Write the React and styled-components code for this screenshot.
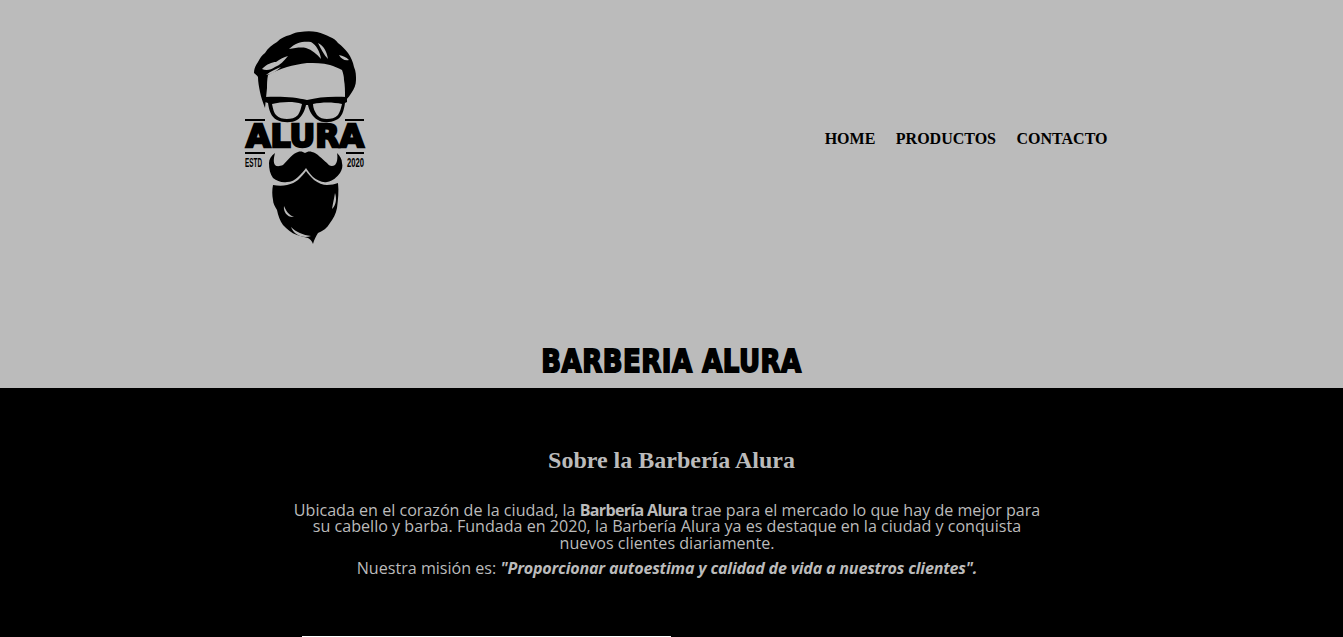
import React from "react";
import styled, { createGlobalStyle } from "styled-components";

const Global = createGlobalStyle`
  * { box-sizing: border-box; }
  html, body { margin: 0; padding: 0; height: 100%; overflow: hidden; background: #000; }
`;

const Page = styled.div`
  height: 637px;
  display: flex;
  flex-direction: column;
  overflow: hidden;
`;

const Header = styled.header`
  height: 388px;
  background: #bbbbbb;
  display: flex;
  flex-direction: column;
  align-items: center;
`;

const HeaderBar = styled.div`
  width: 940px;
  margin-top: 30px;
  padding-left: 38.5px;
  padding-right: 34px;
  display: flex;
  justify-content: space-between;
  align-items: center;
`;

const Logo = styled.svg`
  display: block;
  width: 130px;
  height: 216px;
`;

const Nav = styled.nav`
  display: flex;
  gap: 20.5px;
  margin-top: 2px;
`;

const NavLink = styled.a`
  font: bold 16px "Liberation Serif", serif;
  color: #000;
  text-decoration: none;
`;

const Title = styled.h1`
  margin: 100px 0 0;
  font: 900 26px "DejaVu Sans", sans-serif;
  letter-spacing: 0.5px;
  line-height: 30px;
  color: #000;
  -webkit-text-stroke: 1.5px #000;
  transform: scaleY(1.25);
`;

const About = styled.section`
  position: relative;
  flex: 1;
  background: #000;
  display: flex;
  flex-direction: column;
  align-items: center;
  padding-top: 59px;
`;

const AboutTitle = styled.h2`
  margin: 0 0 28px;
  font: bold 24px/27px "Liberation Serif", serif;
  color: #bbbbbb;
`;

const Text = styled.p`
  margin: 0 9px 9px 0;
  width: 760px;
  text-align: center;
  font: 16.1px/16.4px "Open Sans", sans-serif;
  color: #bbbbbb;
`;

const Strong = styled.strong`
  letter-spacing: -0.7px;
`;

const Mission = styled.em`
  font-weight: bold;
  letter-spacing: -0.2px;
`;

const Edge = styled.div`
  position: absolute;
  left: 302px;
  bottom: 0;
  width: 369px;
  height: 1px;
  background: #fff;
`;

// coordinates of the drawing are the page's pixels, so it can be read against the reference
const LogoArt = () => (
  <Logo viewBox="240 30 130 216">
    {/* hair */}
    <path d="M254 73 C254 68 256 65 258 62 C260 58 262 55 265 53 C268 48 272 45 277 42 C281 38 285 36 290 35 C294 33 297 32 300 32 C306 31 312 31 317 32 C322 33 326 35 330 37 C333 38 336 40 338 43 C342 46 345 49 348 53 C351 57 353 62 354 67 C356 71 356 76 356 80 C356 85 354 89 352 92 C350 95 348 98 346 100 L345 97 C345 91 345 85 344 80 C344 76 343 73 342 70 C338 68 334 66 330 65 C322 63 315 63 307 63 C300 64 293 65 287 67 C280 69 273 72 268 75 C267 80 267 84 267 88 L266 98 L265 108 C263 103 261 97 260 92 C259 87 258 82 258 77 C257 75 255 74 254 73 Z" fill="#000" />
    <path d="M262 69 C267 64 272 62 276 62 C280 59 284 57 288 56 C284 61 280 65 275 67 C271 70 266 71 262 69 Z M266 75 C271 71 276 69 281 67 C277 71 272 74 266 75 Z M289 49 C296 42 304 41 311 42 C316 45 320 51 321 59 C317 54 312 50 306 48 C301 47 295 48 289 49 Z M318 43 C324 46 327 52 328 59 C324 55 321 49 318 43 Z M339 55 C343 56 346 57 349 60 C345 61 341 59 339 55 Z" fill="#bbbbbb" />
    {/* glasses */}
    <path fillRule="evenodd" d="M265 97 C280 96 296 97 307 100 C318 97 332 96 347 97 L347 102 L345 103 C344 110 342 118 336 120 C330 123 322 123 318 120 C312 117 309 110 308 105 L306 105 C305 110 302 117 297 120 C292 123 283 123 277 120 C271 117 269 110 268 103 L265 102 Z M272 104 C273 109 274 113 276 115 C279 118 283 119 287 119 C291 119 295 118 298 115 C300 112 301 108 302 104 C293 101 281 102 272 104 Z M313 104 C313 108 315 112 317 115 C320 118 323 119 327 119 C331 119 335 118 338 115 C340 112 341 108 342 104 C333 102 322 102 313 104 Z" fill="#000" />
    {/* rules and lettering */}
    <rect x="245" y="119" width="20" height="2" fill="#000" />
    <rect x="345" y="119" width="19" height="2" fill="#000" />
    <rect x="245" y="152" width="20" height="2" fill="#000" />
    <rect x="346" y="152" width="18" height="2" fill="#000" />
    <text x="246" y="147" textLength="118" lengthAdjust="spacingAndGlyphs" fontFamily="'DejaVu Sans', sans-serif" fontWeight="bold" fontSize="32" stroke="#000" strokeWidth="2.4">ALURA</text>
    <text x="245" y="167" textLength="17" lengthAdjust="spacingAndGlyphs" fontFamily="'Liberation Sans', sans-serif" fontWeight="bold" fontSize="12">ESTD</text>
    <text x="347" y="167" textLength="17" lengthAdjust="spacingAndGlyphs" fontFamily="'Liberation Sans', sans-serif" fontWeight="bold" fontSize="12">2020</text>
    {/* moustache */}
    <path d="M275 153 C271 156 269 159 269 163 C269 169 270 174 273 178 C277 181 282 183 287 182 C291 182 295 180 298 177 C301 174 304 171 306 168 C308 171 310 174 313 177 C317 180 322 183 327 182 C333 181 337 177 340 173 C342 170 343 166 342 163 C342 159 340 156 337 153 C338 158 337 163 335 165 C332 167 329 166 327 163 C322 159 317 153 312 152 C309 151 307 152 305 153 C303 152 301 151 298 152 C293 153 288 160 283 165 C280 166 277 167 275 165 C273 162 274 157 275 153 Z" fill="#000" />
    {/* beard */}
    <path d="M273 185 C278 186 283 186 287 185 C292 184 295 182 298 180 C301 177 304 174 306 171 C308 174 311 177 314 180 C318 183 323 185 327 185 C331 185 335 184 338 183 C339 191 338 200 337 208 C336 214 333 219 330 223 C327 228 323 231 318 233 C316 236 314 240 313 244 C312 241 310 239 308 238 C304 237 300 236 297 235 C291 233 287 229 283 225 C280 221 278 215 277 210 C275 207 273 203 273 200 C272 195 272 190 273 185 Z" fill="#000" />
    <path d="M284 206 C286 211 289 215 294 217 C288 218 283 212 284 206 Z M291 227 C296 232 303 235 311 236 C303 239 294 235 291 227 Z M335 193 C337 199 336 205 332 209 C333 203 334 199 335 193 Z" fill="#bbbbbb" />
  </Logo>
);

const App = () => (
  <>
    <Global />
    <Page>
      <Header>
        <HeaderBar>
          <LogoArt />
          <Nav>
            <NavLink href="#">HOME</NavLink>
            <NavLink href="#">PRODUCTOS</NavLink>
            <NavLink href="#">CONTACTO</NavLink>
          </Nav>
        </HeaderBar>
        <Title>BARBERIA ALURA</Title>
      </Header>
      <About>
        <AboutTitle>Sobre la Barbería Alura</AboutTitle>
        <Text>
          Ubicada en el corazón de la ciudad, la <Strong>Barbería Alura</Strong> trae para el mercado lo que hay de mejor para su cabello y barba. Fundada en 2020, la Barbería Alura ya es destaque en la ciudad y conquista nuevos clientes diariamente.
        </Text>
        <Text>
          Nuestra misión es: <Mission>"Proporcionar autoestima y calidad de vida a nuestros clientes".</Mission>
        </Text>
        <Edge />
      </About>
    </Page>
  </>
);

export default App;
